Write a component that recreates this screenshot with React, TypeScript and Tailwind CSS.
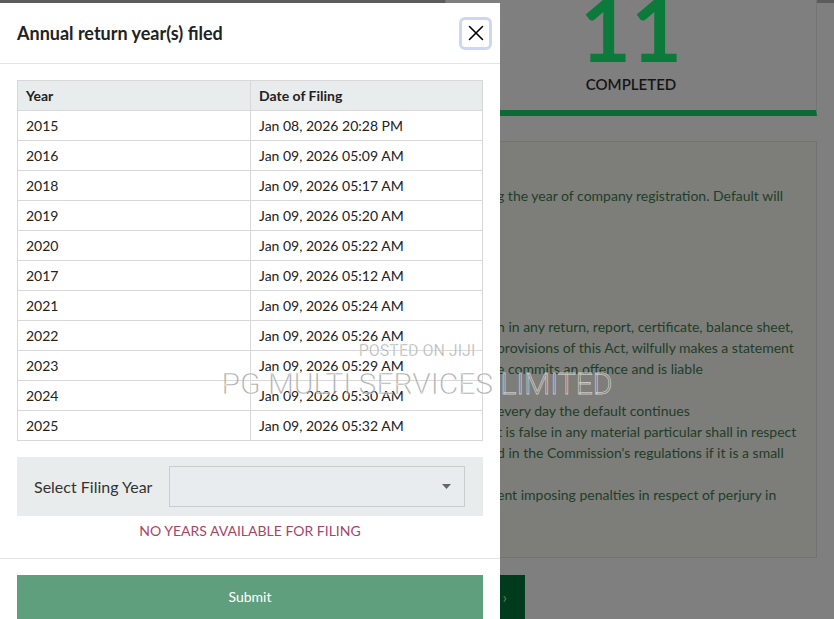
import { X } from "lucide-react"

const FILED = [
  { year: "2015", date: "Jan 08, 2026 20:28 PM" },
  { year: "2016", date: "Jan 09, 2026 05:09 AM" },
  { year: "2018", date: "Jan 09, 2026 05:17 AM" },
  { year: "2019", date: "Jan 09, 2026 05:20 AM" },
  { year: "2020", date: "Jan 09, 2026 05:22 AM" },
  { year: "2017", date: "Jan 09, 2026 05:12 AM" },
  { year: "2021", date: "Jan 09, 2026 05:24 AM" },
  { year: "2022", date: "Jan 09, 2026 05:26 AM" },
  { year: "2023", date: "Jan 09, 2026 05:29 AM" },
  { year: "2024", date: "Jan 09, 2026 05:30 AM" },
  { year: "2025", date: "Jan 09, 2026 05:32 AM" },
]

// notice text behind the backdrop ("" = line that ends before the modal edge)
const NOTICE = [
  "n in any return, report, certificate, balance sheet,",
  "provisions of this Act, wilfully makes a statement",
  "e commits an offence and is liable",
  "",
  "every day the default continues",
  "t is false in any material particular shall in respect",
  "d in the Commission's regulations if it is a small",
  "",
  "ent imposing penalties in respect of perjury in",
]

export default function App() {
  return (
    <div className="relative h-[619px] w-[834px] overflow-hidden bg-[#7f7f7f] font-['Lato',sans-serif]">
      {/* dimmed dashboard behind the modal */}
      <div className="-mt-[16px] flex gap-[15px] bg-[linear-gradient(#5c5c5c_0_19px,transparent_19px)] px-[17px]">
        <div className="h-[132px] w-[413px] bg-[#5c5c5c]" />
        <div className="flex flex-1 flex-col items-center border-x border-[#747474] border-b-[6px] border-b-[#0c6b35] bg-[#7f7f7f] pb-[16px]">
          <span className="text-[88px] leading-none font-bold text-[#0b7a3a]">11</span>
          <span className="mt-[2px] text-[15px] leading-[20px] font-semibold text-[#151515]">COMPLETED</span>
        </div>
      </div>

      <div className="mx-[17px] mt-[25px] border border-[#727272] bg-[#7d7d79] pt-[43px] pb-[52px] pl-[479px] text-[14px] leading-[21px] text-[#213d2a]">
        <p className="whitespace-nowrap">g the year of company registration. Default will</p>
        <div className="mt-[110px]">
          {NOTICE.map((line, i) => (
            <p key={i} className="h-[21px] whitespace-nowrap">{line}</p>
          ))}
        </div>
      </div>

      <div className="mt-[17px] flex justify-center">
        <button className="flex h-[44px] w-[216px] items-center justify-between bg-[#003b1e] px-[18px] text-[14px] text-white">
          <span>Continue</span>
          <span className="text-[16px] text-[#3f8c5c]">›</span>
        </button>
      </div>

      {/* modal */}
      <div className="absolute top-[3px] left-0 h-[640px] w-[500px] bg-white text-[#222]">
        <div className="flex h-[61px] items-center justify-between border-b border-[#e4e4e4] pr-[8px] pl-[17px]">
          <h2 className="text-[18px] font-bold text-[#222]">Annual return year(s) filed</h2>
          <button className="flex h-[33px] w-[33px] items-center justify-center rounded-[6px] border-[3px] border-[#cbd7f4]">
            <X className="h-[26px] w-[26px] text-black" strokeWidth={1.4} />
          </button>
        </div>

        <div className="px-[17px] pt-[16px] pb-[17px]">
          <table className="w-full border-collapse text-[14px]">
            <thead>
              <tr className="h-[30px] bg-[#e9ecec]">
                <th className="w-[233px] border border-[#d8d8d8] px-[8px] text-left font-bold">Year</th>
                <th className="border border-[#d8d8d8] px-[8px] text-left font-bold">Date of Filing</th>
              </tr>
            </thead>
            <tbody>
              {FILED.map(r => (
                <tr key={r.year} className="h-[30px]">
                  <td className="border border-[#d8d8d8] px-[8px]">{r.year}</td>
                  <td className="border border-[#d8d8d8] px-[8px]">{r.date}</td>
                </tr>
              ))}
            </tbody>
          </table>

          <div className="mt-[16px] flex items-center bg-[#e9ecec] py-[9px] pr-[18px] pl-[17px]">
            <label className="w-[135px] text-[16px] text-[#333]">Select Filing Year</label>
            <div className="flex h-[41px] flex-1 items-center justify-end border border-[#c9cdcd] bg-[#e8ecee] pr-[13px]">
              <svg width="9" height="5" viewBox="0 0 9 5" className="text-[#666]"><path d="M0 0h9L4.5 5z" fill="currentColor" /></svg>
            </div>
          </div>

          <p className="mt-[5px] text-center text-[14px] leading-[20px] text-[#a94468]">NO YEARS AVAILABLE FOR FILING</p>
        </div>

        <div className="border-t border-[#e4e4e4] px-[17px] pt-[16px]">
          <button className="h-[44px] w-full bg-[#5f9f7d] pb-[2px] text-[14px] text-white">Submit</button>
        </div>
      </div>

      {/* watermark */}
      <div className="pointer-events-none absolute inset-x-0 top-[341px] flex flex-col items-center font-['Roboto',sans-serif] font-light text-[rgba(105,105,105,0.6)] [-webkit-text-stroke:0.8px_rgba(255,255,255,0.6)]">
        <span className="text-[16px] leading-[20px] font-normal">POSTED ON JIJI</span>
        <span className="mt-[6px] text-[30px] leading-[34px]">PG MULTI SERVICES LIMITED</span>
      </div>
    </div>
  )
}
